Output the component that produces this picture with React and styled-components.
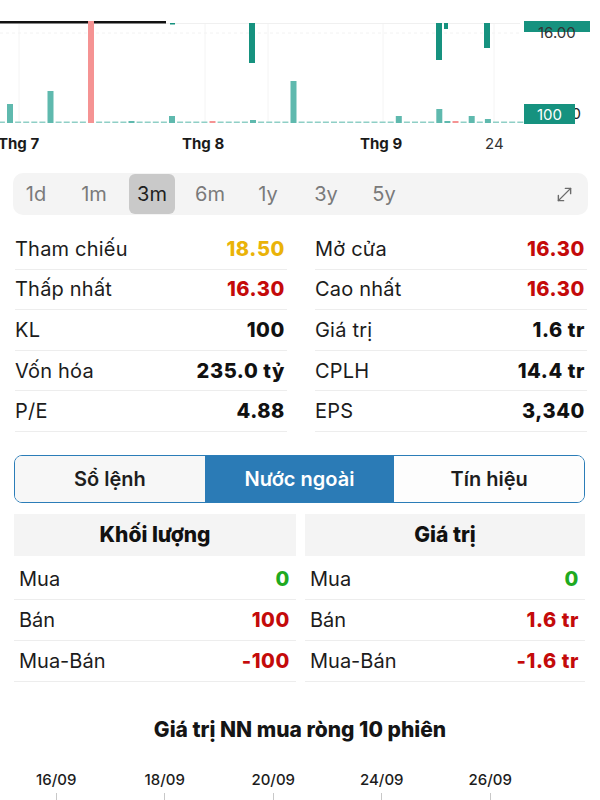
import React from "react";
import styled, { createGlobalStyle } from "styled-components";
import { MoveDiagonal } from "lucide-react";

const GlobalStyle = createGlobalStyle`
  body {
    margin: 0;
    background: #fff;
    font-family: Inter, "Noto Sans", "Liberation Sans", sans-serif;
    color: #1c1c1c;
  }
`;

const PERIODS = ["1d", "1m", "3m", "6m", "1y", "3y", "5y"];

const STATS = [
  ["Tham chiếu", "18.50", "#eab308", "Mở cửa", "16.30", "#c40a0a"],
  ["Thấp nhất", "16.30", "#c40a0a", "Cao nhất", "16.30", "#c40a0a"],
  ["KL", "100", "#111", "Giá trị", "1.6 tr", "#111"],
  ["Vốn hóa", "235.0 tỷ", "#111", "CPLH", "14.4 tr", "#111"],
  ["P/E", "4.88", "#111", "EPS", "3,340", "#111"],
];

const FOREIGN = [
  {
    title: "Khối lượng",
    rows: [
      ["Mua", "0", "#1faa1f"],
      ["Bán", "100", "#c40a0a"],
      ["Mua-Bán", "-100", "#c40a0a"],
    ],
  },
  {
    title: "Giá trị",
    rows: [
      ["Mua", "0", "#1faa1f"],
      ["Bán", "1.6 tr", "#c40a0a"],
      ["Mua-Bán", "-1.6 tr", "#c40a0a"],
    ],
  },
];

const DATES = ["16/09", "18/09", "20/09", "24/09", "26/09"];

// volume bars: slot -> [top, colour]
const VOL = {
  0: [104, "#5fb9ae"],
  5: [91, "#5fb9ae"],
  10: [21, "#f59393"],
  15: [121, "#5fb9ae"],
  20: [116, "#5fb9ae"],
  25: [121, "#f59393"],
  30: [120, "#5fb9ae"],
  35: [81, "#5fb9ae"],
  48: [116, "#5fb9ae"],
  53: [109, "#5fb9ae"],
  54: [121, "#5fb9ae"],
  55: [121, "#f59393"],
  57: [116, "#5fb9ae"],
  59: [119, "#5fb9ae"],
};

const PriceChart = () => {
  const bars = [];
  for (let i = -1; i <= 63; i++) {
    const x = 7 + 8.1 * i;
    const v = VOL[i];
    if (v) {
      bars.push(<rect key={i} x={x} y={v[0]} width="6" height={123 - v[0]} fill={v[1]} />);
    } else {
      bars.push(<rect key={i} x={x} y="121.5" width="6" height="1.5" fill="#8fcfc6" />);
    }
  }
  return (
    <ChartSvg width="600" height="160" viewBox="0 0 600 160">
      <line x1="165" y1="23.5" x2="520" y2="23.5" stroke="#f0f0f0" />
      <line x1="0" y1="33" x2="520" y2="33" stroke="#f2f2f2" strokeDasharray="3 3" />
      {[19, 205, 268, 383, 494].map((x) => (
        <line key={x} x1={x} y1="24" x2={x} y2="122" stroke="#f4f4f4" />
      ))}
      <rect x="0" y="21" width="166" height="2.5" fill="#111" />
      <rect x="170" y="23" width="5" height="1.5" fill="#16927f" />
      <rect x="249" y="23" width="6" height="40" fill="#16927f" />
      <rect x="436" y="23" width="6" height="37" fill="#16927f" />
      <rect x="444" y="23" width="4" height="6" fill="#16927f" />
      <rect x="484" y="23" width="6" height="25" fill="#16927f" />
      {bars}
      <rect x="524" y="21" width="66" height="11" fill="#16927f" />
      <AxisText x="538" y="38" fill="#333">16.00</AxisText>
      <AxisText x="581" y="119" textAnchor="end" fill="#222">100</AxisText>
      <rect x="524" y="104" width="51" height="20" fill="#16927f" />
      <AxisText x="549.5" y="119.5" textAnchor="middle" fill="#fff">100</AxisText>
      <AxisText x="-2" y="149" $bold fill="#1a1a1a">Thg 7</AxisText>
      <AxisText x="182" y="149" $bold fill="#1a1a1a">Thg 8</AxisText>
      <AxisText x="360" y="149" $bold fill="#1a1a1a">Thg 9</AxisText>
      <AxisText x="485" y="149" fill="#333">24</AxisText>
    </ChartSvg>
  );
};

const App = () => {
  return (
    <Page>
      <GlobalStyle />
      <PriceChart />

      <PeriodBar>
        {PERIODS.map((p) => (
          <PeriodItem key={p} $active={p === "3m"}>
            {p}
          </PeriodItem>
        ))}
        <ExpandButton>
          <MoveDiagonal size={21} strokeWidth={1.6} color="#6b6b6b" />
        </ExpandButton>
      </PeriodBar>

      <StatsGrid>
        {STATS.map((r) => (
          <React.Fragment key={r[0]}>
            <StatRow>
              <StatLabel>{r[0]}</StatLabel>
              <StatValue $color={r[2]}>{r[1]}</StatValue>
            </StatRow>
            <StatRow>
              <StatLabel>{r[3]}</StatLabel>
              <StatValue $color={r[5]}>{r[4]}</StatValue>
            </StatRow>
          </React.Fragment>
        ))}
      </StatsGrid>

      <Tabs>
        <Tab $bg="#f7f7f7">Sổ lệnh</Tab>
        <Tab $active>Nước ngoài</Tab>
        <Tab $bg="#fdfdfd">Tín hiệu</Tab>
      </Tabs>

      <ForeignGrid>
        {FOREIGN.map((t) => (
          <ForeignCol key={t.title}>
            <ForeignHeader>{t.title}</ForeignHeader>
            {t.rows.map((r) => (
              <ForeignRow key={r[0]}>
                <span>{r[0]}</span>
                <StatValue $color={r[2]}>{r[1]}</StatValue>
              </ForeignRow>
            ))}
          </ForeignCol>
        ))}
      </ForeignGrid>

      <SectionTitle>Giá trị NN mua ròng 10 phiên</SectionTitle>

      <DateAxis>
        {DATES.map((d) => (
          <DateTick key={d}>{d}</DateTick>
        ))}
      </DateAxis>
    </Page>
  );
};

export default App;

const Page = styled.div`
  width: 600px;
  height: 800px;
  overflow: hidden;
  background: #fff;
`;

const ChartSvg = styled.svg`
  display: block;
`;

const AxisText = styled.text`
  font-family: Inter, "Liberation Sans", sans-serif;
  font-size: 15px;
  font-weight: ${(p) => (p.$bold ? 700 : 400)};
`;

const PeriodBar = styled.div`
  display: flex;
  align-items: center;
  gap: 12px;
  height: 42px;
  margin: 13px 12px 0 13px;
  padding-right: 13px;
  background: #f4f4f4;
  border-radius: 10px;
`;

const PeriodItem = styled.div`
  width: 46px;
  height: 40px;
  display: flex;
  align-items: center;
  justify-content: center;
  border-radius: 6px;
  font-size: 20px;
  color: ${(p) => (p.$active ? "#1e1e1e" : "#7a7a7a")};
  background: ${(p) => (p.$active ? "#c9c9c9" : "transparent")};
`;

const ExpandButton = styled.div`
  margin-left: auto;
  display: flex;
  align-items: center;
`;

const StatsGrid = styled.div`
  display: grid;
  grid-template-columns: 272px 272px;
  column-gap: 28px;
  margin: 14px 0 0 15px;
`;

const StatRow = styled.div`
  display: flex;
  align-items: center;
  justify-content: space-between;
  height: 39.6px;
  padding-right: 2px;
  border-bottom: 1px solid #ededed;
  font-size: 20px;
  letter-spacing: 0.2px;
`;

const StatLabel = styled.span`
  color: #1c1c1c;
`;

const StatValue = styled.span`
  font-size: 20px;
  font-weight: 800;
  letter-spacing: 0.6px;
  color: ${(p) => p.$color};
`;

const Tabs = styled.div`
  display: grid;
  grid-template-columns: 1fr 1fr 1fr;
  height: 46px;
  margin: 23px 15px 0 14px;
  border: 1px solid #2b7db8;
  border-radius: 8px;
  overflow: hidden;
`;

const Tab = styled.div`
  display: flex;
  align-items: center;
  justify-content: center;
  font-size: 20px;
  font-weight: 600;
  color: ${(p) => (p.$active ? "#fff" : "#1e1e1e")};
  background: ${(p) => (p.$active ? "#2b7bb6" : p.$bg)};
`;

const ForeignGrid = styled.div`
  display: grid;
  grid-template-columns: 282px 280px;
  column-gap: 9px;
  margin: 11px 0 0 14px;
`;

const ForeignCol = styled.div`
  display: flex;
  flex-direction: column;
`;

const ForeignHeader = styled.div`
  height: 42px;
  display: flex;
  align-items: center;
  justify-content: center;
  background: #f4f4f4;
  font-size: 21px;
  font-weight: 800;
  color: #111;
  margin-bottom: 3px;
`;

const ForeignRow = styled.div`
  display: flex;
  align-items: center;
  justify-content: space-between;
  height: 40px;
  padding: 0 6px 0 5px;
  border-bottom: 1px solid #ededed;
  font-size: 20px;
  color: #1c1c1c;
`;

const SectionTitle = styled.div`
  margin-top: 37px;
  line-height: 22px;
  text-align: center;
  font-size: 21px;
  font-weight: 800;
  color: #151515;
`;

const DateAxis = styled.div`
  display: grid;
  grid-template-columns: repeat(5, 108.5px);
  margin: 28px 0 0 2px;
`;

const DateTick = styled.div`
  display: flex;
  flex-direction: column;
  align-items: center;
  font-size: 15px;
  font-weight: 500;
  line-height: 22px;
  color: #1c1c1c;

  &::after {
    content: "";
    width: 1px;
    height: 8px;
    margin-top: 2px;
    background: #c8c8c8;
  }
`;
